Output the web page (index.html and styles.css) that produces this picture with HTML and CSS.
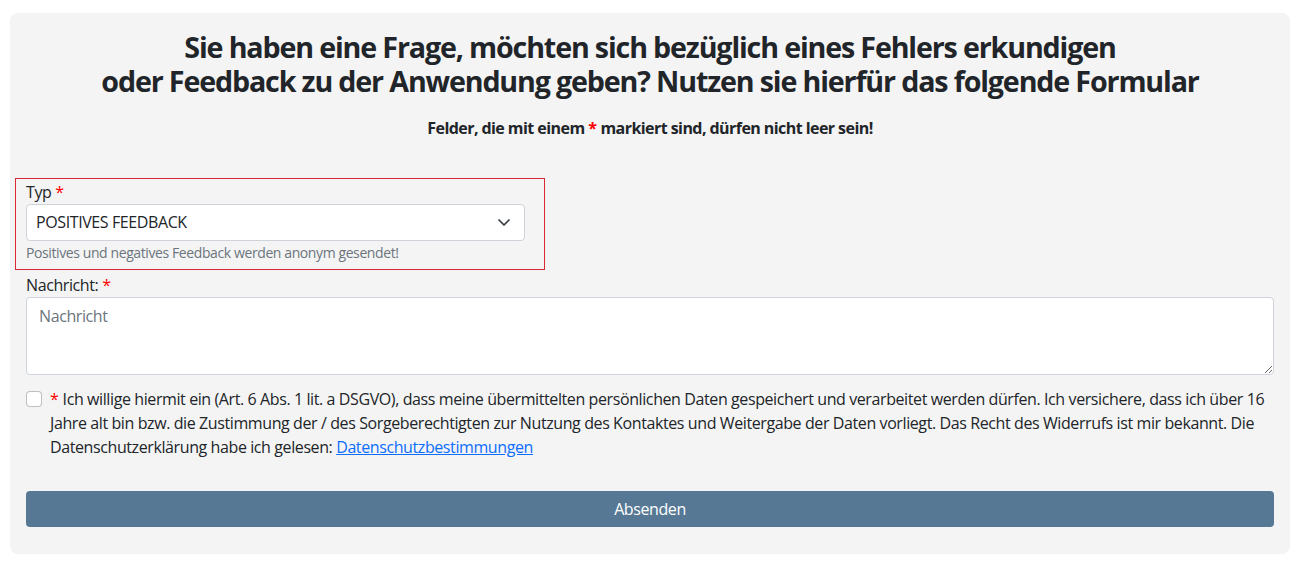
FILE: index.html
```html
<!DOCTYPE html>
<html lang="de">
<head>
<meta charset="utf-8">
<title>Feedback</title>
<link rel="stylesheet" href="styles.css">
</head>
<body>
<div class="page">
  <div class="card">
    <h3 class="title"><span class="title-line">Sie haben eine Frage, möchten sich bezüglich eines Fehlers erkundigen</span><span class="title-line">oder Feedback zu der Anwendung geben? Nutzen sie hierfür das folgende Formular</span></h3>
    <p class="notice">Felder, die mit einem <span class="req">*</span> markiert sind, dürfen nicht leer sein!</p>
    <form class="form">
      <div class="type-box">
        <label class="label" for="typ">Typ <span class="req">*</span></label>
        <div class="select-wrap">
          <select class="select" id="typ">
            <option>POSITIVES FEEDBACK</option>
            <option>NEGATIVES FEEDBACK</option>
            <option>FRAGE</option>
            <option>FEHLER</option>
          </select>
          <svg class="chev" width="12" height="7" viewBox="0 0 12 7" aria-hidden="true"><path d="M1 1l5 5 5-5" fill="none" stroke="#343a40" stroke-width="1.7" stroke-linecap="round" stroke-linejoin="round"/></svg>
        </div>
        <div class="hint">Positives und negatives Feedback werden anonym gesendet!</div>
      </div>
      <label class="label label-msg" for="msg">Nachricht: <span class="req">*</span></label>
      <textarea class="textarea" id="msg" placeholder="Nachricht"></textarea>
      <div class="check">
        <input class="check-input" type="checkbox" id="dsgvo">
        <label class="check-label" for="dsgvo"><span class="req">*</span> Ich willige hiermit ein (Art. 6 Abs. 1 lit. a DSGVO), dass meine übermittelten persönlichen Daten gespeichert und verarbeitet werden dürfen. Ich versichere, dass ich über 16 Jahre alt bin bzw. die Zustimmung der / des Sorgeberechtigten zur Nutzung des Kontaktes und Weitergabe der Daten vorliegt. Das Recht des Widerrufs ist mir bekannt. Die Datenschutzerklärung habe ich gelesen: <a class="link" href="#">Datenschutzbestimmungen</a></label>
      </div>
      <button class="submit" type="button">Absenden</button>
    </form>
  </div>
</div>
</body>
</html>
```
FILE: styles.css
```css
* {
  box-sizing: border-box;
}

html, body {
  margin: 0;
  background: #ffffff;
}

body {
  font-family: "Open Sans", "Noto Sans", sans-serif;
  font-size: 16px;
  line-height: 1.5;
  color: #212529;
  letter-spacing: -0.025em;
}

.page {
  padding: 13px 18px 0 10px;
}

.card {
  background: #f4f4f4;
  border-radius: 8px;
  padding: 17px 16px 27px;
}

.title {
  margin: 0;
  font-size: 28.65px;
  line-height: 1.2;
  font-weight: 700;
  text-align: center;
  letter-spacing: -0.04em;
}

.title-line {
  display: block;
}

.notice {
  margin: 17px 0 0;
  font-size: 16px;
  font-weight: 700;
  text-align: center;
  letter-spacing: -0.035em;
}

.req {
  color: #ff0000;
  letter-spacing: normal;
}

.form {
  margin-top: 38px;
  display: flex;
  flex-direction: column;
}

.type-box {
  width: 530px;
  margin-left: -11px;
  border: 1px solid #dc2535;
  padding: 1px 19px 6px 10px;
}

.label {
  display: block;
  font-size: 16px;
  line-height: 24px;
}

.label-msg {
  margin-top: 3px;
}

.select-wrap {
  position: relative;
}

.select {
  display: block;
  width: 100%;
  height: 37px;
  padding: 0 36px 0 9px;
  font-family: inherit;
  font-size: 16px;
  letter-spacing: inherit;
  color: #212529;
  background: #ffffff;
  border: 1px solid #ced4da;
  border-radius: 4px;
  appearance: none;
  -webkit-appearance: none;
}

.chev {
  position: absolute;
  right: 15px;
  top: 15px;
}

.hint {
  padding-top: 1px;
  font-size: 14px;
  line-height: 21px;
  color: #6c757d;
}

.textarea {
  display: block;
  width: 100%;
  height: 78px;
  padding: 6px 12px;
  font-family: inherit;
  font-size: 16px;
  line-height: 24px;
  letter-spacing: inherit;
  color: #212529;
  background: #ffffff;
  border: 1px solid #ced4da;
  border-radius: 4px;
  resize: vertical;
}

.textarea::placeholder {
  color: #6c757d;
}

.check {
  margin-top: 12px;
  padding-left: 24px;
}

.check-input {
  appearance: none;
  -webkit-appearance: none;
  float: left;
  width: 16px;
  height: 16px;
  margin: 4px 0 0 -24px;
  background: #ffffff;
  border: 1px solid rgba(0, 0, 0, 0.25);
  border-radius: 4px;
}

.link {
  color: #0d6efd;
  text-decoration: underline;
}

.submit {
  margin-top: 32px;
  width: 100%;
  height: 36px;
  border: 0;
  border-radius: 4px;
  background: #567895;
  color: #ffffff;
  font-family: inherit;
  font-size: 16px;
  letter-spacing: inherit;
  line-height: 24px;
}
```
